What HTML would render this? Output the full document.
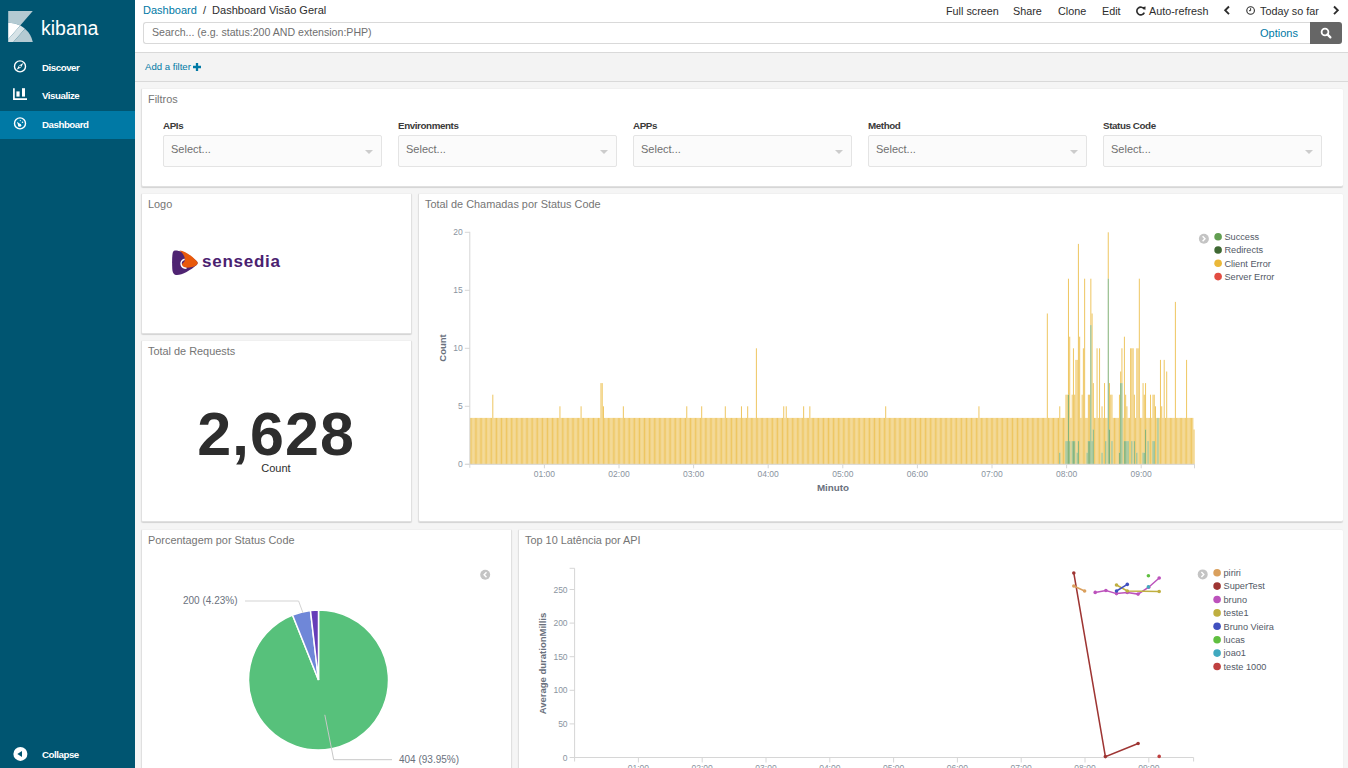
<!DOCTYPE html>
<html><head><meta charset="utf-8">
<style>
*{box-sizing:border-box;margin:0;padding:0}
html,body{width:1348px;height:768px;overflow:hidden;background:#fff;font-family:"Liberation Sans",sans-serif}
.abs{position:absolute}
#side{position:absolute;left:0;top:0;width:135px;height:768px;background:#005571}
.nav{position:absolute;left:0;width:135px;height:28px;color:#fff;font-weight:bold;font-size:9.7px;letter-spacing:-0.45px}
.nav span{position:absolute;left:42px;top:8px;white-space:nowrap}
.nav svg{position:absolute;left:12px;top:6px}
.nav.active{background:#0079a5}
#top{position:absolute;left:135px;top:0;width:1213px;height:53px;background:#fff;border-bottom:1px solid #d9d9d9}
#fbar{position:absolute;left:135px;top:53px;width:1213px;height:29px;background:#f3f3f3;border-bottom:1px solid #d9d9d9}
#dash{position:absolute;left:135px;top:82px;width:1213px;height:686px;background:#f5f5f5}
.panel{position:absolute;background:#fff;border:1px solid #e0e0e0;border-top-color:#f0f0f0;border-radius:2px;box-shadow:0 1px 1px rgba(0,0,0,.14)}
.pr{border-right:none}
.ptitle{position:absolute;left:6px;top:4px;font-size:10.9px;color:#757575;white-space:nowrap}
.tn{position:absolute;top:5px;font-size:10.8px;color:#2d2d2d;white-space:nowrap}
.flabel{position:absolute;top:31px;font-size:9.8px;font-weight:bold;color:#3a3a3a;letter-spacing:-0.4px}
.sel{position:absolute;top:46px;width:219px;height:32px;background:#fbfbfb;border:1px solid #e4e4e4;border-radius:2px}
.sel span{position:absolute;left:7px;top:6.5px;font-size:11px;color:#707070}
.sel i{position:absolute;right:8px;top:14px;width:0;height:0;border-left:4px solid transparent;border-right:4px solid transparent;border-top:4px solid #ccc}
svg text{font-family:"Liberation Sans",sans-serif}
</style></head><body>
<div id="side">
  <svg class="abs" style="left:8px;top:11px" width="25" height="31" viewBox="0 0 24.35 30.7">
    <path d="M0,0 H24.35 L11.9,14.3 A23.792,23.792 0 0 0 0,11.7 Z" fill="#b4cad2"/>
    <path d="M0,11.7 A23.792,23.792 0 0 1 11.9,14.3 L0,27.97 Z" fill="#ffffff"/>
    <path d="M11.9,14.3 A23.792,23.792 0 0 1 16.6,17.49 L5.1,30.7 H0 V27.97 Z" fill="#d7e3e7"/>
    <path d="M16.6,17.49 A23.792,23.792 0 0 1 24.35,30.7 H5.1 Z" fill="#b4cad2"/>
  </svg>
  <div class="abs" style="left:41px;top:17px;font-size:19.5px;color:#fff">kibana</div>
  <div class="nav" style="top:54px">
    <svg style="top:5px" width="16" height="16" viewBox="0 0 16 16"><circle cx="8" cy="7.4" r="5.5" stroke="#fff" stroke-width="1.4" fill="none"/><path d="M4.6,10.8 L7,6.4 L11.4,4 L9,8.4 Z" fill="#fff"/><circle cx="8" cy="7.4" r="0.9" fill="#005571"/></svg>
    <span>Discover</span></div>
  <div class="nav" style="top:82px">
    <svg style="top:5px" width="16" height="16" viewBox="0 0 16 16"><path d="M1.9,1.2 V12.1 H15" stroke="#fff" stroke-width="1.7" fill="none"/><rect x="4.4" y="4.4" width="3.2" height="5.2" fill="#fff"/><rect x="10" y="1.2" width="3" height="8.4" fill="#fff"/></svg>
    <span>Visualize</span></div>
  <div class="nav active" style="top:111px">
    <svg width="16" height="16" viewBox="0 0 16 16"><circle cx="8" cy="6.4" r="5.5" stroke="#fff" stroke-width="1.4" fill="none"/><circle cx="7.7" cy="8.3" r="1.5" fill="#fff"/><path d="M4.9,4.7 L8.9,7.4 L6.6,9.4 Z" fill="#fff"/><circle cx="10.5" cy="5.3" r="0.75" fill="#fff"/><circle cx="8.3" cy="3.6" r="0.55" fill="#fff"/></svg>
    <span>Dashboard</span></div>
  <div class="nav" style="top:741px">
    <svg style="top:5px" width="16" height="16" viewBox="0 0 16 16"><circle cx="8.4" cy="7.9" r="7" fill="#fff"/><path d="M5.3,7.9 L10,4.9 V10.9 Z" fill="#005571"/></svg>
    <span>Collapse</span></div>
</div>
<div id="top">
  <div class="abs" style="left:8px;top:3.5px;font-size:11px;color:#0079a5;white-space:nowrap">Dashboard <span style="color:#2d2d2d">&nbsp;/&nbsp; Dashboard Visão Geral</span></div>
  <div class="tn" style="left:811px">Full screen</div>
  <div class="tn" style="left:878px">Share</div>
  <div class="tn" style="left:923px">Clone</div>
  <div class="tn" style="left:967px">Edit</div>
  <svg class="abs" style="left:1001px;top:6px" width="10" height="10" viewBox="0 0 10 10"><path d="M8.2,3.2 A3.9,3.9 0 1 0 8.3,6.6" stroke="#2d2d2d" stroke-width="1.6" fill="none"/><path d="M6.2,1.2 L9.6,0.6 L9.3,4.2 Z" fill="#2d2d2d"/></svg>
  <div class="tn" style="left:1014px">Auto-refresh</div>
  <svg class="abs" style="left:1088px;top:5px" width="8" height="11" viewBox="0 0 8 11"><path d="M6,1.5 L2.2,5.3 L6,9.1" stroke="#2d2d2d" stroke-width="1.9" fill="none"/></svg>
  <svg class="abs" style="left:1111px;top:6px" width="10" height="10" viewBox="0 0 10 10"><circle cx="4.6" cy="4.5" r="3.8" stroke="#2d2d2d" stroke-width="1.1" fill="none"/><path d="M4.6,2.2 V4.7 H3" stroke="#2d2d2d" stroke-width="1" fill="none"/></svg>
  <div class="tn" style="left:1125px">Today so far</div>
  <svg class="abs" style="left:1197px;top:5px" width="8" height="11" viewBox="0 0 8 11"><path d="M2,1.5 L5.8,5.3 L2,9.1" stroke="#2d2d2d" stroke-width="1.9" fill="none"/></svg>
  <div class="abs" style="left:8px;top:22px;width:1167px;height:22px;border:1px solid #d9d9d9;border-right:none;border-radius:3px 0 0 3px"></div>
  <div class="abs" style="left:17px;top:26px;font-size:10.6px;color:#6f6f6f;white-space:nowrap">Search... (e.g. status:200 AND extension:PHP)</div>
  <div class="abs" style="left:1125px;top:27px;font-size:11px;color:#0079a5">Options</div>
  <div class="abs" style="left:1175px;top:22px;width:32px;height:22px;background:#666;border-radius:0 3px 3px 0">
    <svg class="abs" style="left:10px;top:5px" width="12" height="12" viewBox="0 0 12 12"><circle cx="5" cy="5" r="3.4" stroke="#fff" stroke-width="1.8" fill="none"/><path d="M7.4,7.4 L10.4,10.4" stroke="#fff" stroke-width="2.2" stroke-linecap="round"/></svg>
  </div>
</div>
<div id="fbar">
  <div class="abs" style="left:10px;top:8px;font-size:9.6px;color:#0079a5;white-space:nowrap">Add a filter</div>
  <svg class="abs" style="left:58px;top:10px" width="8" height="8" viewBox="0 0 7 7"><path d="M3.5,0 V7 M0,3.5 H7" stroke="#0079a5" stroke-width="2"/></svg>
</div>
<div id="dash">
  <div class="panel pr" style="left:6px;top:6px;width:1202px;height:99px">
    <div class="ptitle">Filtros</div>
    <div class="flabel" style="left:21px">APIs</div>
    <div class="sel" style="left:21px"><span>Select...</span><i></i></div>
    <div class="flabel" style="left:256px">Environments</div>
    <div class="sel" style="left:256px"><span>Select...</span><i></i></div>
    <div class="flabel" style="left:491px">APPs</div>
    <div class="sel" style="left:491px"><span>Select...</span><i></i></div>
    <div class="flabel" style="left:726px">Method</div>
    <div class="sel" style="left:726px"><span>Select...</span><i></i></div>
    <div class="flabel" style="left:961px">Status Code</div>
    <div class="sel" style="left:961px"><span>Select...</span><i></i></div>
  </div>
  <div class="panel" style="left:6px;top:111px;width:271px;height:141px"><div class="ptitle">Logo</div>
    <svg class="abs" style="left:30px;top:56px" width="26" height="26" viewBox="0 0 26 26">
      <path d="M3,0.6 C8,0.2 18,5 24.6,11 C26,12.3 26,13.7 24.6,15 C19,20 10,25 5,25.1 C2,25.1 0.6,23 0.3,19 C0,14 0,8 0.5,4 C0.8,2 1.5,0.8 3,0.6 Z" fill="#4f2472"/>
      <path d="M7.5,0.4 C13,0.8 20,6 24.6,11 C26,12.3 26,13.7 24.6,15 C22,17 17,18 13,17.6 C10.5,17.2 9.6,15.5 10.2,14 C10.8,12.6 12.2,12.4 12.8,10.5 C13.4,7.5 11,3 7.5,0.4 Z" fill="#e8590c"/>
      <path d="M12.6,9.2 C9.8,10 8.6,12.5 9.2,14.8 C9.8,17 12,18.2 14.5,18.2" stroke="#fff" stroke-width="1.5" fill="none"/>
    </svg>
    <div class="abs" style="left:60px;top:58px;font-size:17px;font-weight:bold;color:#4a2170;letter-spacing:0.75px">sensedia</div>
  </div>
  <div class="panel" style="left:6px;top:258px;width:271px;height:182px"><div class="ptitle">Total de Requests</div>
    <div class="abs" style="left:0;width:268px;top:58px;text-align:center;font-size:61px;font-weight:bold;color:#2d2d2d;line-height:70px;letter-spacing:1px">2,628</div>
    <div class="abs" style="left:0;width:268px;top:121px;text-align:center;font-size:11px;color:#2d2d2d">Count</div>
  </div>
  <div class="panel pr" style="left:283px;top:111px;width:925px;height:329px"><div class="ptitle">Total de Chamadas por Status Code</div></div>
  <div class="panel" style="left:6px;top:447px;width:371px;height:250px"><div class="ptitle">Porcentagem por Status Code</div></div>
  <div class="panel pr" style="left:383px;top:447px;width:825px;height:250px"><div class="ptitle">Top 10 Latência por API</div></div>
</div>
<svg class="abs" style="left:0;top:0" width="1348" height="768" viewBox="0 0 1348 768"><g fill="#EAB839" fill-opacity="0.8"><rect x="469.92" y="417.90" width="1.0" height="46.40"/><rect x="471.16" y="417.90" width="1.0" height="46.40"/><rect x="472.41" y="417.90" width="1.0" height="46.40"/><rect x="473.65" y="417.90" width="1.0" height="46.40"/><rect x="474.89" y="417.90" width="1.0" height="46.40"/><rect x="476.14" y="417.90" width="1.0" height="46.40"/><rect x="477.38" y="417.90" width="1.0" height="46.40"/><rect x="478.62" y="417.90" width="1.0" height="46.40"/><rect x="479.87" y="417.90" width="1.0" height="46.40"/><rect x="481.11" y="417.90" width="1.0" height="46.40"/><rect x="482.35" y="417.90" width="1.0" height="46.40"/><rect x="483.60" y="417.90" width="1.0" height="46.40"/><rect x="484.84" y="417.90" width="1.0" height="46.40"/><rect x="486.08" y="417.90" width="1.0" height="46.40"/><rect x="487.33" y="417.90" width="1.0" height="46.40"/><rect x="488.57" y="417.90" width="1.0" height="46.40"/><rect x="489.81" y="417.90" width="1.0" height="46.40"/><rect x="491.06" y="417.90" width="1.0" height="46.40"/><rect x="492.30" y="394.70" width="1.0" height="69.60"/><rect x="493.54" y="417.90" width="1.0" height="46.40"/><rect x="494.79" y="417.90" width="1.0" height="46.40"/><rect x="496.03" y="417.90" width="1.0" height="46.40"/><rect x="497.27" y="417.90" width="1.0" height="46.40"/><rect x="498.52" y="417.90" width="1.0" height="46.40"/><rect x="499.76" y="417.90" width="1.0" height="46.40"/><rect x="501.00" y="417.90" width="1.0" height="46.40"/><rect x="502.25" y="417.90" width="1.0" height="46.40"/><rect x="503.49" y="417.90" width="1.0" height="46.40"/><rect x="504.73" y="417.90" width="1.0" height="46.40"/><rect x="505.98" y="417.90" width="1.0" height="46.40"/><rect x="507.22" y="417.90" width="1.0" height="46.40"/><rect x="508.46" y="417.90" width="1.0" height="46.40"/><rect x="509.71" y="417.90" width="1.0" height="46.40"/><rect x="510.95" y="417.90" width="1.0" height="46.40"/><rect x="512.19" y="417.90" width="1.0" height="46.40"/><rect x="513.44" y="417.90" width="1.0" height="46.40"/><rect x="514.68" y="417.90" width="1.0" height="46.40"/><rect x="515.92" y="417.90" width="1.0" height="46.40"/><rect x="517.17" y="417.90" width="1.0" height="46.40"/><rect x="518.41" y="417.90" width="1.0" height="46.40"/><rect x="519.65" y="417.90" width="1.0" height="46.40"/><rect x="520.90" y="417.90" width="1.0" height="46.40"/><rect x="522.14" y="417.90" width="1.0" height="46.40"/><rect x="523.38" y="417.90" width="1.0" height="46.40"/><rect x="524.63" y="417.90" width="1.0" height="46.40"/><rect x="525.87" y="417.90" width="1.0" height="46.40"/><rect x="527.11" y="417.90" width="1.0" height="46.40"/><rect x="528.36" y="417.90" width="1.0" height="46.40"/><rect x="529.60" y="417.90" width="1.0" height="46.40"/><rect x="530.84" y="417.90" width="1.0" height="46.40"/><rect x="532.09" y="417.90" width="1.0" height="46.40"/><rect x="533.33" y="417.90" width="1.0" height="46.40"/><rect x="534.57" y="417.90" width="1.0" height="46.40"/><rect x="535.82" y="417.90" width="1.0" height="46.40"/><rect x="537.06" y="417.90" width="1.0" height="46.40"/><rect x="538.30" y="417.90" width="1.0" height="46.40"/><rect x="539.55" y="417.90" width="1.0" height="46.40"/><rect x="540.79" y="417.90" width="1.0" height="46.40"/><rect x="542.03" y="417.90" width="1.0" height="46.40"/><rect x="543.28" y="417.90" width="1.0" height="46.40"/><rect x="544.52" y="417.90" width="1.0" height="46.40"/><rect x="545.76" y="417.90" width="1.0" height="46.40"/><rect x="547.01" y="417.90" width="1.0" height="46.40"/><rect x="548.25" y="417.90" width="1.0" height="46.40"/><rect x="549.49" y="417.90" width="1.0" height="46.40"/><rect x="550.74" y="417.90" width="1.0" height="46.40"/><rect x="551.98" y="417.90" width="1.0" height="46.40"/><rect x="553.22" y="417.90" width="1.0" height="46.40"/><rect x="554.47" y="417.90" width="1.0" height="46.40"/><rect x="555.71" y="417.90" width="1.0" height="46.40"/><rect x="556.95" y="417.90" width="1.0" height="46.40"/><rect x="558.20" y="417.90" width="1.0" height="46.40"/><rect x="559.44" y="406.30" width="1.0" height="58.00"/><rect x="560.68" y="417.90" width="1.0" height="46.40"/><rect x="561.93" y="417.90" width="1.0" height="46.40"/><rect x="563.17" y="417.90" width="1.0" height="46.40"/><rect x="564.41" y="417.90" width="1.0" height="46.40"/><rect x="565.66" y="417.90" width="1.0" height="46.40"/><rect x="566.90" y="417.90" width="1.0" height="46.40"/><rect x="568.14" y="417.90" width="1.0" height="46.40"/><rect x="569.39" y="417.90" width="1.0" height="46.40"/><rect x="570.63" y="417.90" width="1.0" height="46.40"/><rect x="571.87" y="417.90" width="1.0" height="46.40"/><rect x="573.12" y="417.90" width="1.0" height="46.40"/><rect x="574.36" y="417.90" width="1.0" height="46.40"/><rect x="575.60" y="417.90" width="1.0" height="46.40"/><rect x="576.85" y="417.90" width="1.0" height="46.40"/><rect x="578.09" y="417.90" width="1.0" height="46.40"/><rect x="579.33" y="417.90" width="1.0" height="46.40"/><rect x="580.58" y="406.30" width="1.0" height="58.00"/><rect x="581.82" y="417.90" width="1.0" height="46.40"/><rect x="583.06" y="417.90" width="1.0" height="46.40"/><rect x="584.31" y="417.90" width="1.0" height="46.40"/><rect x="585.55" y="417.90" width="1.0" height="46.40"/><rect x="586.79" y="417.90" width="1.0" height="46.40"/><rect x="588.04" y="417.90" width="1.0" height="46.40"/><rect x="589.28" y="417.90" width="1.0" height="46.40"/><rect x="590.52" y="417.90" width="1.0" height="46.40"/><rect x="591.77" y="417.90" width="1.0" height="46.40"/><rect x="593.01" y="417.90" width="1.0" height="46.40"/><rect x="594.25" y="417.90" width="1.0" height="46.40"/><rect x="595.50" y="417.90" width="1.0" height="46.40"/><rect x="596.74" y="417.90" width="1.0" height="46.40"/><rect x="597.98" y="417.90" width="1.0" height="46.40"/><rect x="599.23" y="417.90" width="1.0" height="46.40"/><rect x="600.47" y="383.10" width="1.0" height="81.20"/><rect x="601.71" y="383.10" width="1.0" height="81.20"/><rect x="602.96" y="406.30" width="1.0" height="58.00"/><rect x="604.20" y="417.90" width="1.0" height="46.40"/><rect x="605.44" y="417.90" width="1.0" height="46.40"/><rect x="606.69" y="417.90" width="1.0" height="46.40"/><rect x="607.93" y="417.90" width="1.0" height="46.40"/><rect x="609.17" y="417.90" width="1.0" height="46.40"/><rect x="610.42" y="417.90" width="1.0" height="46.40"/><rect x="611.66" y="417.90" width="1.0" height="46.40"/><rect x="612.90" y="417.90" width="1.0" height="46.40"/><rect x="614.15" y="417.90" width="1.0" height="46.40"/><rect x="615.39" y="417.90" width="1.0" height="46.40"/><rect x="616.63" y="417.90" width="1.0" height="46.40"/><rect x="617.88" y="417.90" width="1.0" height="46.40"/><rect x="619.12" y="417.90" width="1.0" height="46.40"/><rect x="620.36" y="417.90" width="1.0" height="46.40"/><rect x="621.61" y="417.90" width="1.0" height="46.40"/><rect x="622.85" y="406.30" width="1.0" height="58.00"/><rect x="624.09" y="417.90" width="1.0" height="46.40"/><rect x="625.34" y="417.90" width="1.0" height="46.40"/><rect x="626.58" y="417.90" width="1.0" height="46.40"/><rect x="627.82" y="417.90" width="1.0" height="46.40"/><rect x="629.07" y="417.90" width="1.0" height="46.40"/><rect x="630.31" y="417.90" width="1.0" height="46.40"/><rect x="631.55" y="417.90" width="1.0" height="46.40"/><rect x="632.80" y="417.90" width="1.0" height="46.40"/><rect x="634.04" y="417.90" width="1.0" height="46.40"/><rect x="635.28" y="417.90" width="1.0" height="46.40"/><rect x="636.53" y="417.90" width="1.0" height="46.40"/><rect x="637.77" y="417.90" width="1.0" height="46.40"/><rect x="639.01" y="417.90" width="1.0" height="46.40"/><rect x="640.26" y="417.90" width="1.0" height="46.40"/><rect x="641.50" y="417.90" width="1.0" height="46.40"/><rect x="642.74" y="417.90" width="1.0" height="46.40"/><rect x="643.99" y="417.90" width="1.0" height="46.40"/><rect x="645.23" y="417.90" width="1.0" height="46.40"/><rect x="646.47" y="417.90" width="1.0" height="46.40"/><rect x="647.72" y="417.90" width="1.0" height="46.40"/><rect x="648.96" y="417.90" width="1.0" height="46.40"/><rect x="650.20" y="417.90" width="1.0" height="46.40"/><rect x="651.45" y="417.90" width="1.0" height="46.40"/><rect x="652.69" y="417.90" width="1.0" height="46.40"/><rect x="653.93" y="417.90" width="1.0" height="46.40"/><rect x="655.18" y="417.90" width="1.0" height="46.40"/><rect x="656.42" y="417.90" width="1.0" height="46.40"/><rect x="657.66" y="417.90" width="1.0" height="46.40"/><rect x="658.91" y="417.90" width="1.0" height="46.40"/><rect x="660.15" y="417.90" width="1.0" height="46.40"/><rect x="661.39" y="417.90" width="1.0" height="46.40"/><rect x="662.64" y="417.90" width="1.0" height="46.40"/><rect x="663.88" y="417.90" width="1.0" height="46.40"/><rect x="665.12" y="417.90" width="1.0" height="46.40"/><rect x="666.37" y="417.90" width="1.0" height="46.40"/><rect x="667.61" y="417.90" width="1.0" height="46.40"/><rect x="668.85" y="417.90" width="1.0" height="46.40"/><rect x="670.10" y="417.90" width="1.0" height="46.40"/><rect x="671.34" y="417.90" width="1.0" height="46.40"/><rect x="672.58" y="417.90" width="1.0" height="46.40"/><rect x="673.83" y="417.90" width="1.0" height="46.40"/><rect x="675.07" y="417.90" width="1.0" height="46.40"/><rect x="676.31" y="417.90" width="1.0" height="46.40"/><rect x="677.56" y="417.90" width="1.0" height="46.40"/><rect x="678.80" y="417.90" width="1.0" height="46.40"/><rect x="680.04" y="417.90" width="1.0" height="46.40"/><rect x="681.29" y="417.90" width="1.0" height="46.40"/><rect x="682.53" y="417.90" width="1.0" height="46.40"/><rect x="683.77" y="417.90" width="1.0" height="46.40"/><rect x="685.02" y="417.90" width="1.0" height="46.40"/><rect x="686.26" y="406.30" width="1.0" height="58.00"/><rect x="687.50" y="417.90" width="1.0" height="46.40"/><rect x="688.75" y="417.90" width="1.0" height="46.40"/><rect x="689.99" y="417.90" width="1.0" height="46.40"/><rect x="691.23" y="417.90" width="1.0" height="46.40"/><rect x="692.48" y="417.90" width="1.0" height="46.40"/><rect x="693.72" y="417.90" width="1.0" height="46.40"/><rect x="694.96" y="417.90" width="1.0" height="46.40"/><rect x="696.21" y="417.90" width="1.0" height="46.40"/><rect x="697.45" y="417.90" width="1.0" height="46.40"/><rect x="698.69" y="417.90" width="1.0" height="46.40"/><rect x="699.94" y="417.90" width="1.0" height="46.40"/><rect x="701.18" y="406.30" width="1.0" height="58.00"/><rect x="702.42" y="417.90" width="1.0" height="46.40"/><rect x="703.67" y="417.90" width="1.0" height="46.40"/><rect x="704.91" y="417.90" width="1.0" height="46.40"/><rect x="706.15" y="417.90" width="1.0" height="46.40"/><rect x="707.40" y="417.90" width="1.0" height="46.40"/><rect x="708.64" y="417.90" width="1.0" height="46.40"/><rect x="709.88" y="417.90" width="1.0" height="46.40"/><rect x="711.13" y="417.90" width="1.0" height="46.40"/><rect x="712.37" y="417.90" width="1.0" height="46.40"/><rect x="713.61" y="417.90" width="1.0" height="46.40"/><rect x="714.86" y="417.90" width="1.0" height="46.40"/><rect x="716.10" y="417.90" width="1.0" height="46.40"/><rect x="717.34" y="417.90" width="1.0" height="46.40"/><rect x="718.59" y="417.90" width="1.0" height="46.40"/><rect x="719.83" y="417.90" width="1.0" height="46.40"/><rect x="721.07" y="417.90" width="1.0" height="46.40"/><rect x="722.32" y="417.90" width="1.0" height="46.40"/><rect x="723.56" y="417.90" width="1.0" height="46.40"/><rect x="724.80" y="406.30" width="1.0" height="58.00"/><rect x="726.05" y="417.90" width="1.0" height="46.40"/><rect x="727.29" y="417.90" width="1.0" height="46.40"/><rect x="728.53" y="417.90" width="1.0" height="46.40"/><rect x="729.78" y="417.90" width="1.0" height="46.40"/><rect x="731.02" y="417.90" width="1.0" height="46.40"/><rect x="732.26" y="417.90" width="1.0" height="46.40"/><rect x="733.51" y="417.90" width="1.0" height="46.40"/><rect x="734.75" y="417.90" width="1.0" height="46.40"/><rect x="735.99" y="417.90" width="1.0" height="46.40"/><rect x="737.24" y="417.90" width="1.0" height="46.40"/><rect x="738.48" y="417.90" width="1.0" height="46.40"/><rect x="739.72" y="417.90" width="1.0" height="46.40"/><rect x="740.97" y="406.30" width="1.0" height="58.00"/><rect x="742.21" y="417.90" width="1.0" height="46.40"/><rect x="743.45" y="417.90" width="1.0" height="46.40"/><rect x="744.70" y="417.90" width="1.0" height="46.40"/><rect x="745.94" y="417.90" width="1.0" height="46.40"/><rect x="747.18" y="406.30" width="1.0" height="58.00"/><rect x="748.43" y="417.90" width="1.0" height="46.40"/><rect x="749.67" y="417.90" width="1.0" height="46.40"/><rect x="750.91" y="417.90" width="1.0" height="46.40"/><rect x="752.16" y="417.90" width="1.0" height="46.40"/><rect x="753.40" y="417.90" width="1.0" height="46.40"/><rect x="754.64" y="417.90" width="1.0" height="46.40"/><rect x="755.89" y="348.30" width="1.0" height="116.00"/><rect x="757.13" y="417.90" width="1.0" height="46.40"/><rect x="758.37" y="417.90" width="1.0" height="46.40"/><rect x="759.62" y="417.90" width="1.0" height="46.40"/><rect x="760.86" y="417.90" width="1.0" height="46.40"/><rect x="762.10" y="417.90" width="1.0" height="46.40"/><rect x="763.35" y="417.90" width="1.0" height="46.40"/><rect x="764.59" y="417.90" width="1.0" height="46.40"/><rect x="765.83" y="417.90" width="1.0" height="46.40"/><rect x="767.08" y="417.90" width="1.0" height="46.40"/><rect x="768.32" y="417.90" width="1.0" height="46.40"/><rect x="769.56" y="417.90" width="1.0" height="46.40"/><rect x="770.81" y="417.90" width="1.0" height="46.40"/><rect x="772.05" y="417.90" width="1.0" height="46.40"/><rect x="773.29" y="417.90" width="1.0" height="46.40"/><rect x="774.54" y="417.90" width="1.0" height="46.40"/><rect x="775.78" y="417.90" width="1.0" height="46.40"/><rect x="777.02" y="417.90" width="1.0" height="46.40"/><rect x="778.27" y="417.90" width="1.0" height="46.40"/><rect x="779.51" y="417.90" width="1.0" height="46.40"/><rect x="780.75" y="417.90" width="1.0" height="46.40"/><rect x="782.00" y="417.90" width="1.0" height="46.40"/><rect x="783.24" y="406.30" width="1.0" height="58.00"/><rect x="784.48" y="417.90" width="1.0" height="46.40"/><rect x="785.73" y="406.30" width="1.0" height="58.00"/><rect x="786.97" y="417.90" width="1.0" height="46.40"/><rect x="788.21" y="417.90" width="1.0" height="46.40"/><rect x="789.46" y="417.90" width="1.0" height="46.40"/><rect x="790.70" y="417.90" width="1.0" height="46.40"/><rect x="791.94" y="417.90" width="1.0" height="46.40"/><rect x="793.19" y="417.90" width="1.0" height="46.40"/><rect x="794.43" y="417.90" width="1.0" height="46.40"/><rect x="795.67" y="417.90" width="1.0" height="46.40"/><rect x="796.92" y="417.90" width="1.0" height="46.40"/><rect x="798.16" y="417.90" width="1.0" height="46.40"/><rect x="799.40" y="417.90" width="1.0" height="46.40"/><rect x="800.65" y="417.90" width="1.0" height="46.40"/><rect x="801.89" y="417.90" width="1.0" height="46.40"/><rect x="803.13" y="406.30" width="1.0" height="58.00"/><rect x="804.38" y="417.90" width="1.0" height="46.40"/><rect x="805.62" y="417.90" width="1.0" height="46.40"/><rect x="806.86" y="417.90" width="1.0" height="46.40"/><rect x="808.11" y="417.90" width="1.0" height="46.40"/><rect x="809.35" y="406.30" width="1.0" height="58.00"/><rect x="810.59" y="417.90" width="1.0" height="46.40"/><rect x="811.84" y="417.90" width="1.0" height="46.40"/><rect x="813.08" y="417.90" width="1.0" height="46.40"/><rect x="814.32" y="417.90" width="1.0" height="46.40"/><rect x="815.57" y="417.90" width="1.0" height="46.40"/><rect x="816.81" y="417.90" width="1.0" height="46.40"/><rect x="818.05" y="417.90" width="1.0" height="46.40"/><rect x="819.30" y="417.90" width="1.0" height="46.40"/><rect x="820.54" y="417.90" width="1.0" height="46.40"/><rect x="821.78" y="417.90" width="1.0" height="46.40"/><rect x="823.03" y="417.90" width="1.0" height="46.40"/><rect x="824.27" y="417.90" width="1.0" height="46.40"/><rect x="825.51" y="417.90" width="1.0" height="46.40"/><rect x="826.76" y="417.90" width="1.0" height="46.40"/><rect x="828.00" y="417.90" width="1.0" height="46.40"/><rect x="829.24" y="417.90" width="1.0" height="46.40"/><rect x="830.49" y="417.90" width="1.0" height="46.40"/><rect x="831.73" y="417.90" width="1.0" height="46.40"/><rect x="832.97" y="417.90" width="1.0" height="46.40"/><rect x="834.22" y="417.90" width="1.0" height="46.40"/><rect x="835.46" y="417.90" width="1.0" height="46.40"/><rect x="836.70" y="417.90" width="1.0" height="46.40"/><rect x="837.95" y="417.90" width="1.0" height="46.40"/><rect x="839.19" y="417.90" width="1.0" height="46.40"/><rect x="840.43" y="417.90" width="1.0" height="46.40"/><rect x="841.68" y="417.90" width="1.0" height="46.40"/><rect x="842.92" y="417.90" width="1.0" height="46.40"/><rect x="844.16" y="417.90" width="1.0" height="46.40"/><rect x="845.41" y="417.90" width="1.0" height="46.40"/><rect x="846.65" y="417.90" width="1.0" height="46.40"/><rect x="847.89" y="417.90" width="1.0" height="46.40"/><rect x="849.14" y="417.90" width="1.0" height="46.40"/><rect x="850.38" y="417.90" width="1.0" height="46.40"/><rect x="851.62" y="417.90" width="1.0" height="46.40"/><rect x="852.87" y="417.90" width="1.0" height="46.40"/><rect x="854.11" y="417.90" width="1.0" height="46.40"/><rect x="855.35" y="417.90" width="1.0" height="46.40"/><rect x="856.60" y="417.90" width="1.0" height="46.40"/><rect x="857.84" y="417.90" width="1.0" height="46.40"/><rect x="859.08" y="417.90" width="1.0" height="46.40"/><rect x="860.33" y="417.90" width="1.0" height="46.40"/><rect x="861.57" y="417.90" width="1.0" height="46.40"/><rect x="862.81" y="417.90" width="1.0" height="46.40"/><rect x="864.06" y="417.90" width="1.0" height="46.40"/><rect x="865.30" y="417.90" width="1.0" height="46.40"/><rect x="866.54" y="417.90" width="1.0" height="46.40"/><rect x="867.79" y="417.90" width="1.0" height="46.40"/><rect x="869.03" y="417.90" width="1.0" height="46.40"/><rect x="870.27" y="417.90" width="1.0" height="46.40"/><rect x="871.52" y="417.90" width="1.0" height="46.40"/><rect x="872.76" y="417.90" width="1.0" height="46.40"/><rect x="874.00" y="417.90" width="1.0" height="46.40"/><rect x="875.25" y="417.90" width="1.0" height="46.40"/><rect x="876.49" y="417.90" width="1.0" height="46.40"/><rect x="877.73" y="417.90" width="1.0" height="46.40"/><rect x="878.98" y="417.90" width="1.0" height="46.40"/><rect x="880.22" y="417.90" width="1.0" height="46.40"/><rect x="881.46" y="417.90" width="1.0" height="46.40"/><rect x="882.71" y="417.90" width="1.0" height="46.40"/><rect x="883.95" y="417.90" width="1.0" height="46.40"/><rect x="885.19" y="406.30" width="1.0" height="58.00"/><rect x="886.44" y="417.90" width="1.0" height="46.40"/><rect x="887.68" y="417.90" width="1.0" height="46.40"/><rect x="888.92" y="417.90" width="1.0" height="46.40"/><rect x="890.17" y="417.90" width="1.0" height="46.40"/><rect x="891.41" y="417.90" width="1.0" height="46.40"/><rect x="892.65" y="417.90" width="1.0" height="46.40"/><rect x="893.90" y="417.90" width="1.0" height="46.40"/><rect x="895.14" y="417.90" width="1.0" height="46.40"/><rect x="896.38" y="417.90" width="1.0" height="46.40"/><rect x="897.63" y="417.90" width="1.0" height="46.40"/><rect x="898.87" y="417.90" width="1.0" height="46.40"/><rect x="900.11" y="417.90" width="1.0" height="46.40"/><rect x="901.36" y="417.90" width="1.0" height="46.40"/><rect x="902.60" y="417.90" width="1.0" height="46.40"/><rect x="903.84" y="417.90" width="1.0" height="46.40"/><rect x="905.09" y="417.90" width="1.0" height="46.40"/><rect x="906.33" y="417.90" width="1.0" height="46.40"/><rect x="907.57" y="417.90" width="1.0" height="46.40"/><rect x="908.82" y="417.90" width="1.0" height="46.40"/><rect x="910.06" y="417.90" width="1.0" height="46.40"/><rect x="911.30" y="417.90" width="1.0" height="46.40"/><rect x="912.55" y="417.90" width="1.0" height="46.40"/><rect x="913.79" y="417.90" width="1.0" height="46.40"/><rect x="915.03" y="417.90" width="1.0" height="46.40"/><rect x="916.28" y="417.90" width="1.0" height="46.40"/><rect x="917.52" y="417.90" width="1.0" height="46.40"/><rect x="918.76" y="417.90" width="1.0" height="46.40"/><rect x="920.01" y="417.90" width="1.0" height="46.40"/><rect x="921.25" y="417.90" width="1.0" height="46.40"/><rect x="922.49" y="417.90" width="1.0" height="46.40"/><rect x="923.74" y="417.90" width="1.0" height="46.40"/><rect x="924.98" y="417.90" width="1.0" height="46.40"/><rect x="926.22" y="417.90" width="1.0" height="46.40"/><rect x="927.47" y="417.90" width="1.0" height="46.40"/><rect x="928.71" y="417.90" width="1.0" height="46.40"/><rect x="929.95" y="417.90" width="1.0" height="46.40"/><rect x="931.20" y="417.90" width="1.0" height="46.40"/><rect x="932.44" y="417.90" width="1.0" height="46.40"/><rect x="933.68" y="417.90" width="1.0" height="46.40"/><rect x="934.93" y="417.90" width="1.0" height="46.40"/><rect x="936.17" y="417.90" width="1.0" height="46.40"/><rect x="937.41" y="417.90" width="1.0" height="46.40"/><rect x="938.66" y="417.90" width="1.0" height="46.40"/><rect x="939.90" y="417.90" width="1.0" height="46.40"/><rect x="941.14" y="417.90" width="1.0" height="46.40"/><rect x="942.39" y="417.90" width="1.0" height="46.40"/><rect x="943.63" y="417.90" width="1.0" height="46.40"/><rect x="944.87" y="417.90" width="1.0" height="46.40"/><rect x="946.12" y="417.90" width="1.0" height="46.40"/><rect x="947.36" y="417.90" width="1.0" height="46.40"/><rect x="948.60" y="417.90" width="1.0" height="46.40"/><rect x="949.85" y="417.90" width="1.0" height="46.40"/><rect x="951.09" y="417.90" width="1.0" height="46.40"/><rect x="952.33" y="417.90" width="1.0" height="46.40"/><rect x="953.58" y="417.90" width="1.0" height="46.40"/><rect x="954.82" y="417.90" width="1.0" height="46.40"/><rect x="956.06" y="417.90" width="1.0" height="46.40"/><rect x="957.31" y="417.90" width="1.0" height="46.40"/><rect x="958.55" y="417.90" width="1.0" height="46.40"/><rect x="959.79" y="417.90" width="1.0" height="46.40"/><rect x="961.04" y="417.90" width="1.0" height="46.40"/><rect x="962.28" y="417.90" width="1.0" height="46.40"/><rect x="963.52" y="417.90" width="1.0" height="46.40"/><rect x="964.77" y="417.90" width="1.0" height="46.40"/><rect x="966.01" y="417.90" width="1.0" height="46.40"/><rect x="967.25" y="417.90" width="1.0" height="46.40"/><rect x="968.50" y="417.90" width="1.0" height="46.40"/><rect x="969.74" y="417.90" width="1.0" height="46.40"/><rect x="970.98" y="417.90" width="1.0" height="46.40"/><rect x="972.23" y="417.90" width="1.0" height="46.40"/><rect x="973.47" y="417.90" width="1.0" height="46.40"/><rect x="974.71" y="417.90" width="1.0" height="46.40"/><rect x="975.96" y="417.90" width="1.0" height="46.40"/><rect x="977.20" y="417.90" width="1.0" height="46.40"/><rect x="978.44" y="406.30" width="1.0" height="58.00"/><rect x="979.69" y="417.90" width="1.0" height="46.40"/><rect x="980.93" y="417.90" width="1.0" height="46.40"/><rect x="982.17" y="417.90" width="1.0" height="46.40"/><rect x="983.42" y="417.90" width="1.0" height="46.40"/><rect x="984.66" y="417.90" width="1.0" height="46.40"/><rect x="985.90" y="417.90" width="1.0" height="46.40"/><rect x="987.15" y="417.90" width="1.0" height="46.40"/><rect x="988.39" y="417.90" width="1.0" height="46.40"/><rect x="989.63" y="417.90" width="1.0" height="46.40"/><rect x="990.88" y="417.90" width="1.0" height="46.40"/><rect x="992.12" y="417.90" width="1.0" height="46.40"/><rect x="993.36" y="417.90" width="1.0" height="46.40"/><rect x="994.61" y="417.90" width="1.0" height="46.40"/><rect x="995.85" y="417.90" width="1.0" height="46.40"/><rect x="997.09" y="417.90" width="1.0" height="46.40"/><rect x="998.34" y="417.90" width="1.0" height="46.40"/><rect x="999.58" y="417.90" width="1.0" height="46.40"/><rect x="1000.82" y="417.90" width="1.0" height="46.40"/><rect x="1002.07" y="417.90" width="1.0" height="46.40"/><rect x="1003.31" y="417.90" width="1.0" height="46.40"/><rect x="1004.55" y="417.90" width="1.0" height="46.40"/><rect x="1005.80" y="417.90" width="1.0" height="46.40"/><rect x="1007.04" y="417.90" width="1.0" height="46.40"/><rect x="1008.28" y="417.90" width="1.0" height="46.40"/><rect x="1009.53" y="417.90" width="1.0" height="46.40"/><rect x="1010.77" y="417.90" width="1.0" height="46.40"/><rect x="1012.01" y="417.90" width="1.0" height="46.40"/><rect x="1013.26" y="417.90" width="1.0" height="46.40"/><rect x="1014.50" y="417.90" width="1.0" height="46.40"/><rect x="1015.74" y="417.90" width="1.0" height="46.40"/><rect x="1016.99" y="417.90" width="1.0" height="46.40"/><rect x="1018.23" y="417.90" width="1.0" height="46.40"/><rect x="1019.47" y="417.90" width="1.0" height="46.40"/><rect x="1020.72" y="417.90" width="1.0" height="46.40"/><rect x="1021.96" y="417.90" width="1.0" height="46.40"/><rect x="1023.20" y="417.90" width="1.0" height="46.40"/><rect x="1024.45" y="417.90" width="1.0" height="46.40"/><rect x="1025.69" y="417.90" width="1.0" height="46.40"/><rect x="1026.93" y="417.90" width="1.0" height="46.40"/><rect x="1028.18" y="417.90" width="1.0" height="46.40"/><rect x="1029.42" y="417.90" width="1.0" height="46.40"/><rect x="1030.66" y="417.90" width="1.0" height="46.40"/><rect x="1031.91" y="417.90" width="1.0" height="46.40"/><rect x="1033.15" y="417.90" width="1.0" height="46.40"/><rect x="1034.39" y="417.90" width="1.0" height="46.40"/><rect x="1035.64" y="417.90" width="1.0" height="46.40"/><rect x="1036.88" y="417.90" width="1.0" height="46.40"/><rect x="1038.12" y="417.90" width="1.0" height="46.40"/><rect x="1039.37" y="417.90" width="1.0" height="46.40"/><rect x="1040.61" y="417.90" width="1.0" height="46.40"/><rect x="1041.85" y="417.90" width="1.0" height="46.40"/><rect x="1043.10" y="417.90" width="1.0" height="46.40"/><rect x="1044.34" y="417.90" width="1.0" height="46.40"/><rect x="1045.58" y="417.90" width="1.0" height="46.40"/><rect x="1046.83" y="313.50" width="1.0" height="150.80"/><rect x="1048.07" y="417.90" width="1.0" height="46.40"/><rect x="1049.31" y="417.90" width="1.0" height="46.40"/><rect x="1050.56" y="417.90" width="1.0" height="46.40"/><rect x="1051.80" y="417.90" width="1.0" height="46.40"/><rect x="1053.04" y="417.90" width="1.0" height="46.40"/><rect x="1054.29" y="417.90" width="1.0" height="46.40"/><rect x="1055.53" y="417.90" width="1.0" height="46.40"/><rect x="1056.77" y="417.90" width="1.0" height="46.40"/><rect x="1058.02" y="417.90" width="1.0" height="46.40"/><rect x="1059.26" y="406.30" width="1.0" height="46.40"/><rect x="1060.50" y="417.90" width="1.0" height="46.40"/><rect x="1061.75" y="417.90" width="1.0" height="46.40"/><rect x="1062.99" y="417.90" width="1.0" height="46.40"/><rect x="1064.23" y="417.90" width="1.0" height="46.40"/><rect x="1065.48" y="394.70" width="1.0" height="46.40"/><rect x="1066.72" y="394.70" width="1.0" height="46.40"/><rect x="1067.96" y="278.70" width="1.0" height="116.00"/><rect x="1069.21" y="336.70" width="1.0" height="104.40"/><rect x="1070.45" y="417.90" width="1.0" height="46.40"/><rect x="1071.69" y="394.70" width="1.0" height="46.40"/><rect x="1072.94" y="348.30" width="1.0" height="92.80"/><rect x="1074.18" y="394.70" width="1.0" height="46.40"/><rect x="1075.42" y="359.90" width="1.0" height="104.40"/><rect x="1076.67" y="359.90" width="1.0" height="92.80"/><rect x="1077.91" y="243.90" width="1.0" height="197.20"/><rect x="1079.15" y="336.70" width="1.0" height="127.60"/><rect x="1080.40" y="417.90" width="1.0" height="46.40"/><rect x="1081.64" y="394.70" width="1.0" height="69.60"/><rect x="1082.88" y="348.30" width="1.0" height="116.00"/><rect x="1084.13" y="278.70" width="1.0" height="185.60"/><rect x="1085.37" y="417.90" width="1.0" height="46.40"/><rect x="1086.61" y="417.90" width="1.0" height="34.80"/><rect x="1087.86" y="394.70" width="1.0" height="46.40"/><rect x="1089.10" y="394.70" width="1.0" height="46.40"/><rect x="1090.34" y="278.70" width="1.0" height="46.40"/><rect x="1091.59" y="313.50" width="1.0" height="127.60"/><rect x="1092.83" y="383.10" width="1.0" height="46.40"/><rect x="1094.07" y="417.90" width="1.0" height="46.40"/><rect x="1095.32" y="417.90" width="1.0" height="46.40"/><rect x="1096.56" y="348.30" width="1.0" height="116.00"/><rect x="1097.80" y="417.90" width="1.0" height="46.40"/><rect x="1099.05" y="348.30" width="1.0" height="116.00"/><rect x="1100.29" y="417.90" width="1.0" height="46.40"/><rect x="1101.53" y="406.30" width="1.0" height="46.40"/><rect x="1102.78" y="417.90" width="1.0" height="46.40"/><rect x="1104.02" y="383.10" width="1.0" height="81.20"/><rect x="1105.26" y="417.90" width="1.0" height="23.20"/><rect x="1106.51" y="417.90" width="1.0" height="46.40"/><rect x="1107.75" y="232.30" width="1.0" height="46.40"/><rect x="1108.99" y="383.10" width="1.0" height="46.40"/><rect x="1110.24" y="394.70" width="1.0" height="69.60"/><rect x="1111.48" y="394.70" width="1.0" height="46.40"/><rect x="1112.72" y="417.90" width="1.0" height="46.40"/><rect x="1113.97" y="417.90" width="1.0" height="46.40"/><rect x="1115.21" y="417.90" width="1.0" height="46.40"/><rect x="1116.45" y="417.90" width="1.0" height="46.40"/><rect x="1117.70" y="417.90" width="1.0" height="46.40"/><rect x="1118.94" y="394.70" width="1.0" height="58.00"/><rect x="1120.18" y="371.50" width="1.0" height="11.60"/><rect x="1121.43" y="348.30" width="1.0" height="34.80"/><rect x="1122.67" y="417.90" width="1.0" height="46.40"/><rect x="1123.91" y="336.70" width="1.0" height="104.40"/><rect x="1125.16" y="394.70" width="1.0" height="46.40"/><rect x="1126.40" y="406.30" width="1.0" height="34.80"/><rect x="1127.64" y="417.90" width="1.0" height="23.20"/><rect x="1128.89" y="417.90" width="1.0" height="46.40"/><rect x="1130.13" y="348.30" width="1.0" height="116.00"/><rect x="1131.37" y="348.30" width="1.0" height="92.80"/><rect x="1132.62" y="348.30" width="1.0" height="116.00"/><rect x="1133.86" y="394.70" width="1.0" height="46.40"/><rect x="1135.10" y="417.90" width="1.0" height="46.40"/><rect x="1136.35" y="348.30" width="1.0" height="104.40"/><rect x="1137.59" y="348.30" width="1.0" height="116.00"/><rect x="1138.83" y="278.70" width="1.0" height="185.60"/><rect x="1140.08" y="417.90" width="1.0" height="46.40"/><rect x="1141.32" y="417.90" width="1.0" height="46.40"/><rect x="1142.56" y="383.10" width="1.0" height="69.60"/><rect x="1143.81" y="394.70" width="1.0" height="58.00"/><rect x="1145.05" y="383.10" width="1.0" height="46.40"/><rect x="1146.29" y="417.90" width="1.0" height="46.40"/><rect x="1147.54" y="417.90" width="1.0" height="23.20"/><rect x="1148.78" y="417.90" width="1.0" height="46.40"/><rect x="1150.02" y="394.70" width="1.0" height="69.60"/><rect x="1151.27" y="417.90" width="1.0" height="46.40"/><rect x="1152.51" y="394.70" width="1.0" height="46.40"/><rect x="1153.75" y="394.70" width="1.0" height="46.40"/><rect x="1155.00" y="406.30" width="1.0" height="58.00"/><rect x="1156.24" y="417.90" width="1.0" height="46.40"/><rect x="1157.48" y="417.90" width="1.0" height="0.00"/><rect x="1158.73" y="417.90" width="1.0" height="46.40"/><rect x="1159.97" y="359.90" width="1.0" height="104.40"/><rect x="1161.21" y="406.30" width="1.0" height="58.00"/><rect x="1162.46" y="417.90" width="1.0" height="46.40"/><rect x="1163.70" y="359.90" width="1.0" height="104.40"/><rect x="1164.94" y="417.90" width="1.0" height="46.40"/><rect x="1166.19" y="371.50" width="1.0" height="92.80"/><rect x="1167.43" y="417.90" width="1.0" height="46.40"/><rect x="1168.67" y="417.90" width="1.0" height="46.40"/><rect x="1169.92" y="417.90" width="1.0" height="46.40"/><rect x="1171.16" y="417.90" width="1.0" height="46.40"/><rect x="1172.40" y="417.90" width="1.0" height="46.40"/><rect x="1173.65" y="417.90" width="1.0" height="46.40"/><rect x="1174.89" y="301.90" width="1.0" height="162.40"/><rect x="1176.13" y="417.90" width="1.0" height="46.40"/><rect x="1177.38" y="417.90" width="1.0" height="46.40"/><rect x="1178.62" y="417.90" width="1.0" height="46.40"/><rect x="1179.86" y="417.90" width="1.0" height="46.40"/><rect x="1181.11" y="417.90" width="1.0" height="46.40"/><rect x="1182.35" y="417.90" width="1.0" height="46.40"/><rect x="1183.59" y="417.90" width="1.0" height="46.40"/><rect x="1184.84" y="417.90" width="1.0" height="46.40"/><rect x="1186.08" y="359.90" width="1.0" height="104.40"/><rect x="1187.32" y="417.90" width="1.0" height="46.40"/><rect x="1188.57" y="417.90" width="1.0" height="46.40"/><rect x="1189.81" y="417.90" width="1.0" height="46.40"/><rect x="1191.05" y="417.90" width="1.0" height="46.40"/><rect x="1192.30" y="417.90" width="1.0" height="46.40"/><rect x="1193.54" y="429.50" width="1.0" height="34.80"/></g><g fill="#629E51" fill-opacity="0.8"><rect x="1059.26" y="452.70" width="1.0" height="11.60"/><rect x="1065.48" y="441.10" width="1.0" height="23.20"/><rect x="1066.72" y="441.10" width="1.0" height="23.20"/><rect x="1067.96" y="394.70" width="1.0" height="69.60"/><rect x="1069.21" y="441.10" width="1.0" height="23.20"/><rect x="1071.69" y="441.10" width="1.0" height="23.20"/><rect x="1072.94" y="441.10" width="1.0" height="23.20"/><rect x="1074.18" y="441.10" width="1.0" height="23.20"/><rect x="1076.67" y="452.70" width="1.0" height="11.60"/><rect x="1077.91" y="441.10" width="1.0" height="23.20"/><rect x="1086.61" y="452.70" width="1.0" height="11.60"/><rect x="1087.86" y="441.10" width="1.0" height="23.20"/><rect x="1089.10" y="441.10" width="1.0" height="23.20"/><rect x="1090.34" y="325.10" width="1.0" height="139.20"/><rect x="1091.59" y="441.10" width="1.0" height="23.20"/><rect x="1092.83" y="429.50" width="1.0" height="34.80"/><rect x="1101.53" y="452.70" width="1.0" height="11.60"/><rect x="1105.26" y="441.10" width="1.0" height="23.20"/><rect x="1107.75" y="278.70" width="1.0" height="185.60"/><rect x="1108.99" y="429.50" width="1.0" height="34.80"/><rect x="1111.48" y="441.10" width="1.0" height="23.20"/><rect x="1118.94" y="452.70" width="1.0" height="11.60"/><rect x="1120.18" y="383.10" width="1.0" height="81.20"/><rect x="1121.43" y="383.10" width="1.0" height="81.20"/><rect x="1123.91" y="441.10" width="1.0" height="23.20"/><rect x="1125.16" y="441.10" width="1.0" height="23.20"/><rect x="1126.40" y="441.10" width="1.0" height="23.20"/><rect x="1127.64" y="441.10" width="1.0" height="23.20"/><rect x="1131.37" y="441.10" width="1.0" height="23.20"/><rect x="1133.86" y="441.10" width="1.0" height="23.20"/><rect x="1136.35" y="452.70" width="1.0" height="11.60"/><rect x="1142.56" y="452.70" width="1.0" height="11.60"/><rect x="1143.81" y="452.70" width="1.0" height="11.60"/><rect x="1145.05" y="429.50" width="1.0" height="34.80"/><rect x="1147.54" y="441.10" width="1.0" height="23.20"/><rect x="1152.51" y="441.10" width="1.0" height="23.20"/><rect x="1153.75" y="441.10" width="1.0" height="23.20"/><rect x="1157.48" y="417.90" width="1.0" height="46.40"/></g><path d="M469.8,231.8 V467.8 M465.3,464.3 H1195" stroke="#d6d6d6" stroke-width="1" fill="none"/><path d="M464.8,464.3 H469.8" stroke="#d6d6d6" stroke-width="1"/><text x="462.8" y="467.3" text-anchor="end" font-size="8.5" fill="#8a94a0">0</text><path d="M464.8,406.3 H469.8" stroke="#d6d6d6" stroke-width="1"/><text x="462.8" y="409.3" text-anchor="end" font-size="8.5" fill="#8a94a0">5</text><path d="M464.8,348.3 H469.8" stroke="#d6d6d6" stroke-width="1"/><text x="462.8" y="351.3" text-anchor="end" font-size="8.5" fill="#8a94a0">10</text><path d="M464.8,290.3 H469.8" stroke="#d6d6d6" stroke-width="1"/><text x="462.8" y="293.3" text-anchor="end" font-size="8.5" fill="#8a94a0">15</text><path d="M464.8,232.3 H469.8" stroke="#d6d6d6" stroke-width="1"/><text x="462.8" y="235.3" text-anchor="end" font-size="8.5" fill="#8a94a0">20</text><path d="M544.4,464.3 V468.3" stroke="#d6d6d6" stroke-width="1"/><text x="544.4" y="477" text-anchor="middle" font-size="8.5" fill="#8a94a0">01:00</text><path d="M619.0,464.3 V468.3" stroke="#d6d6d6" stroke-width="1"/><text x="619.0" y="477" text-anchor="middle" font-size="8.5" fill="#8a94a0">02:00</text><path d="M693.6,464.3 V468.3" stroke="#d6d6d6" stroke-width="1"/><text x="693.6" y="477" text-anchor="middle" font-size="8.5" fill="#8a94a0">03:00</text><path d="M768.2,464.3 V468.3" stroke="#d6d6d6" stroke-width="1"/><text x="768.2" y="477" text-anchor="middle" font-size="8.5" fill="#8a94a0">04:00</text><path d="M842.8,464.3 V468.3" stroke="#d6d6d6" stroke-width="1"/><text x="842.8" y="477" text-anchor="middle" font-size="8.5" fill="#8a94a0">05:00</text><path d="M917.4,464.3 V468.3" stroke="#d6d6d6" stroke-width="1"/><text x="917.4" y="477" text-anchor="middle" font-size="8.5" fill="#8a94a0">06:00</text><path d="M992.0,464.3 V468.3" stroke="#d6d6d6" stroke-width="1"/><text x="992.0" y="477" text-anchor="middle" font-size="8.5" fill="#8a94a0">07:00</text><path d="M1066.6,464.3 V468.3" stroke="#d6d6d6" stroke-width="1"/><text x="1066.6" y="477" text-anchor="middle" font-size="8.5" fill="#8a94a0">08:00</text><path d="M1141.2,464.3 V468.3" stroke="#d6d6d6" stroke-width="1"/><text x="1141.2" y="477" text-anchor="middle" font-size="8.5" fill="#8a94a0">09:00</text><path d="M1194.5,464.3 V468.3" stroke="#d6d6d6" stroke-width="1"/><text x="833" y="491" text-anchor="middle" font-size="9.8" font-weight="bold" fill="#6a717d">Minuto</text><text transform="translate(445.5,348) rotate(-90)" text-anchor="middle" font-size="9.5" font-weight="bold" fill="#6a717d">Count</text><circle cx="1218.1" cy="236.7" r="3.8" fill="#629E51"/><text x="1224.4" y="240.0" font-size="9.2" fill="#535966">Success</text><circle cx="1218.1" cy="250.0" r="3.8" fill="#3F6833"/><text x="1224.4" y="253.3" font-size="9.2" fill="#535966">Redirects</text><circle cx="1218.1" cy="263.3" r="3.8" fill="#EAB839"/><text x="1224.4" y="266.6" font-size="9.2" fill="#535966">Client Error</text><circle cx="1218.1" cy="276.6" r="3.8" fill="#E24D42"/><text x="1224.4" y="279.9" font-size="9.2" fill="#535966">Server Error</text><circle cx="1203.9" cy="238.7" r="5" fill="#c4c4c4"/><path d="M1202.6,236.2 L1205,238.7 L1202.6,241.2" stroke="#fff" stroke-width="1.4" fill="none"/><path d="M318.5,680.0 L318.50,610.00 A70.0,70.0 0 1 1 292.50,615.01 Z" fill="#57c17b" stroke="#fff" stroke-width="1.5"/><path d="M318.5,680.0 L292.50,615.01 A70.0,70.0 0 0 1 310.45,610.46 Z" fill="#6f87d8" stroke="#fff" stroke-width="1.5"/><path d="M318.5,680.0 L310.45,610.46 A70.0,70.0 0 0 1 318.50,610.00 Z" fill="#663db8" stroke="#fff" stroke-width="1.5"/><path d="M245,601 H298.6 L303,613" stroke="#d3d3d3" stroke-width="1" fill="none"/><path d="M324.8,714.8 L333.7,759.7 H392" stroke="#c8c8c8" stroke-width="1" fill="none"/><text x="183" y="604" font-size="10" fill="#6a717d">200 (4.23%)</text><text x="399" y="763" font-size="10" fill="#6a717d">404 (93.95%)</text><circle cx="485.2" cy="574.7" r="5" fill="#c4c4c4"/><path d="M486.5,572.2 L484.1,574.7 L486.5,577.2" stroke="#fff" stroke-width="1.4" fill="none"/><path d="M574.6,568.3 V761.5 M570.1,757.5 H1193.6 V761.5" stroke="#d6d6d6" stroke-width="1" fill="none"/><path d="M569.6,757.5 H574.6" stroke="#d6d6d6" stroke-width="1"/><text x="567.6" y="760.5" text-anchor="end" font-size="8.5" fill="#8a94a0">0</text><path d="M569.6,723.9 H574.6" stroke="#d6d6d6" stroke-width="1"/><text x="567.6" y="726.9" text-anchor="end" font-size="8.5" fill="#8a94a0">50</text><path d="M569.6,690.3 H574.6" stroke="#d6d6d6" stroke-width="1"/><text x="567.6" y="693.3" text-anchor="end" font-size="8.5" fill="#8a94a0">100</text><path d="M569.6,656.7 H574.6" stroke="#d6d6d6" stroke-width="1"/><text x="567.6" y="659.7" text-anchor="end" font-size="8.5" fill="#8a94a0">150</text><path d="M569.6,623.1 H574.6" stroke="#d6d6d6" stroke-width="1"/><text x="567.6" y="626.1" text-anchor="end" font-size="8.5" fill="#8a94a0">200</text><path d="M569.6,589.5 H574.6" stroke="#d6d6d6" stroke-width="1"/><text x="567.6" y="592.5" text-anchor="end" font-size="8.5" fill="#8a94a0">250</text><path d="M569.6,568.3 H574.6" stroke="#d6d6d6" stroke-width="1"/><path d="M638.4,757.5 V762.5" stroke="#d6d6d6" stroke-width="1"/><text x="638.4" y="771.2" text-anchor="middle" font-size="8.5" fill="#8a94a0">01:00</text><path d="M702.2,757.5 V762.5" stroke="#d6d6d6" stroke-width="1"/><text x="702.2" y="771.2" text-anchor="middle" font-size="8.5" fill="#8a94a0">02:00</text><path d="M766.0,757.5 V762.5" stroke="#d6d6d6" stroke-width="1"/><text x="766.0" y="771.2" text-anchor="middle" font-size="8.5" fill="#8a94a0">03:00</text><path d="M829.8,757.5 V762.5" stroke="#d6d6d6" stroke-width="1"/><text x="829.8" y="771.2" text-anchor="middle" font-size="8.5" fill="#8a94a0">04:00</text><path d="M893.6,757.5 V762.5" stroke="#d6d6d6" stroke-width="1"/><text x="893.6" y="771.2" text-anchor="middle" font-size="8.5" fill="#8a94a0">05:00</text><path d="M957.4,757.5 V762.5" stroke="#d6d6d6" stroke-width="1"/><text x="957.4" y="771.2" text-anchor="middle" font-size="8.5" fill="#8a94a0">06:00</text><path d="M1021.2,757.5 V762.5" stroke="#d6d6d6" stroke-width="1"/><text x="1021.2" y="771.2" text-anchor="middle" font-size="8.5" fill="#8a94a0">07:00</text><path d="M1085.0,757.5 V762.5" stroke="#d6d6d6" stroke-width="1"/><text x="1085.0" y="771.2" text-anchor="middle" font-size="8.5" fill="#8a94a0">08:00</text><path d="M1148.8,757.5 V762.5" stroke="#d6d6d6" stroke-width="1"/><text x="1148.8" y="771.2" text-anchor="middle" font-size="8.5" fill="#8a94a0">09:00</text><text transform="translate(545.5,663.5) rotate(-90)" text-anchor="middle" font-size="9.5" font-weight="bold" fill="#6a717d">Average durationMillis</text><path d="M1073.8,573 L1105.4,756.6 L1138.1,743.5" stroke="#9e3533" stroke-width="1.5" fill="none"/><circle cx="1073.8" cy="573" r="1.8" fill="#9e3533"/><circle cx="1105.4" cy="756.6" r="1.8" fill="#9e3533"/><circle cx="1138.1" cy="743.5" r="1.8" fill="#9e3533"/><path d="M1073.8,586 L1084.6,591" stroke="#daa05d" stroke-width="1.5" fill="none"/><circle cx="1073.8" cy="586" r="1.8" fill="#daa05d"/><circle cx="1084.6" cy="591" r="1.8" fill="#daa05d"/><path d="M1095.2,592.4 L1105.9,590.5 L1116.5,593.6 L1127.3,592.4 L1138.1,594.1 L1148.7,587.2 L1159.2,578" stroke="#bc52bc" stroke-width="1.5" fill="none"/><circle cx="1095.2" cy="592.4" r="1.8" fill="#bc52bc"/><circle cx="1105.9" cy="590.5" r="1.8" fill="#bc52bc"/><circle cx="1116.5" cy="593.6" r="1.8" fill="#bc52bc"/><circle cx="1127.3" cy="592.4" r="1.8" fill="#bc52bc"/><circle cx="1138.1" cy="594.1" r="1.8" fill="#bc52bc"/><circle cx="1148.7" cy="587.2" r="1.8" fill="#bc52bc"/><circle cx="1159.2" cy="578" r="1.8" fill="#bc52bc"/><path d="M1116.5,585 L1127.3,591 L1159.2,591.5" stroke="#bfaf40" stroke-width="1.5" fill="none"/><circle cx="1116.5" cy="585" r="1.8" fill="#bfaf40"/><circle cx="1127.3" cy="591" r="1.8" fill="#bfaf40"/><circle cx="1159.2" cy="591.5" r="1.8" fill="#bfaf40"/><path d="M1116.5,591 L1127.3,584.4" stroke="#4050bf" stroke-width="1.5" fill="none"/><circle cx="1116.5" cy="591" r="1.8" fill="#4050bf"/><circle cx="1127.3" cy="584.4" r="1.8" fill="#4050bf"/><circle cx="1148.4" cy="575.8" r="1.8" fill="#60bf40"/><circle cx="1148.4" cy="586.9" r="1.8" fill="#40a9bf"/><circle cx="1159.2" cy="756.4" r="1.8" fill="#bf4040"/><circle cx="1217.1" cy="572.7" r="3.8" fill="#daa05d"/><text x="1223.5" y="576.0" font-size="9.2" fill="#535966">piriri</text><circle cx="1217.1" cy="586.1" r="3.8" fill="#9e3533"/><text x="1223.5" y="589.4" font-size="9.2" fill="#535966">SuperTest</text><circle cx="1217.1" cy="599.5" r="3.8" fill="#bc52bc"/><text x="1223.5" y="602.8" font-size="9.2" fill="#535966">bruno</text><circle cx="1217.1" cy="612.9" r="3.8" fill="#bfaf40"/><text x="1223.5" y="616.2" font-size="9.2" fill="#535966">teste1</text><circle cx="1217.1" cy="626.3" r="3.8" fill="#4050bf"/><text x="1223.5" y="629.6" font-size="9.2" fill="#535966">Bruno Vieira</text><circle cx="1217.1" cy="639.7" r="3.8" fill="#60bf40"/><text x="1223.5" y="643.0" font-size="9.2" fill="#535966">lucas</text><circle cx="1217.1" cy="653.1" r="3.8" fill="#40a9bf"/><text x="1223.5" y="656.4" font-size="9.2" fill="#535966">joao1</text><circle cx="1217.1" cy="666.5" r="3.8" fill="#bf4040"/><text x="1223.5" y="669.8" font-size="9.2" fill="#535966">teste 1000</text><circle cx="1202.7" cy="574.4" r="5" fill="#c4c4c4"/><path d="M1201.4,571.9 L1203.8,574.4 L1201.4,576.9" stroke="#fff" stroke-width="1.4" fill="none"/></svg>
</body></html>
